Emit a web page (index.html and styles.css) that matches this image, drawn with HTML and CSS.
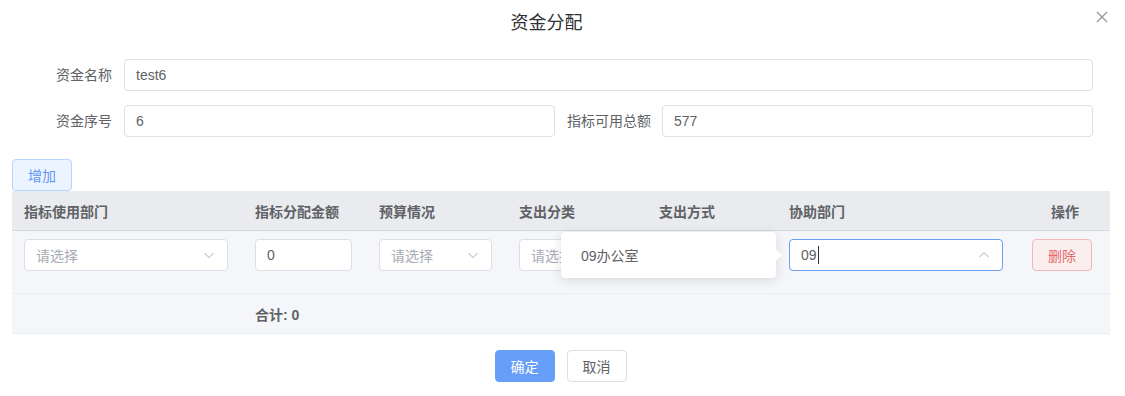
FILE: index.html
```html
<!DOCTYPE html>
<html lang="zh-CN">
<head>
    <meta charset="UTF-8">
    <title>资金分配</title>
    <link rel="stylesheet" href="styles.css">
</head>
<body>
    <div class="dialog">
        <div class="dialog-header">
            <span class="dialog-title">资金分配</span>
            <button class="dialog-close" aria-label="关闭">
                <svg width="12" height="12" viewBox="0 0 12 12"><path d="M1 1L11 11M11 1L1 11" stroke="#909399" stroke-width="1.2" fill="none"/></svg>
            </button>
        </div>

        <div class="dialog-body">
            <form class="fund-form">
                <div class="form-row">
                    <label class="form-label">资金名称</label>
                    <input class="text-input wide" type="text" value="test6">
                </div>
                <div class="form-row">
                    <label class="form-label">资金序号</label>
                    <input class="text-input" type="text" value="6">
                    <label class="form-label-inline">指标可用总额</label>
                    <input class="text-input" type="text" value="577">
                </div>
            </form>

            <button class="btn btn-plain-primary add-btn">增加</button>

            <div class="table-wrap">
                <table class="alloc-table">
                    <colgroup>
                        <col style="width:231px">
                        <col style="width:124px">
                        <col style="width:140px">
                        <col style="width:140px">
                        <col style="width:130px">
                        <col style="width:241px">
                        <col>
                    </colgroup>
                    <thead>
                        <tr>
                            <th>指标使用部门</th>
                            <th>指标分配金额</th>
                            <th>预算情况</th>
                            <th>支出分类</th>
                            <th>支出方式</th>
                            <th>协助部门</th>
                            <th class="center">操作</th>
                        </tr>
                    </thead>
                    <tbody>
                        <tr class="data-row">
                            <td>
                                <div class="select">
                                    <span class="placeholder">请选择</span>
                                    <svg class="chevron" width="12" height="12" viewBox="0 0 12 12"><path d="M1.5 4L6 8.5L10.5 4" stroke="#a8abb2" stroke-width="1" fill="none"/></svg>
                                </div>
                            </td>
                            <td><div class="select"><span class="value">0</span></div></td>
                            <td>
                                <div class="select">
                                    <span class="placeholder">请选择</span>
                                    <svg class="chevron" width="12" height="12" viewBox="0 0 12 12"><path d="M1.5 4L6 8.5L10.5 4" stroke="#a8abb2" stroke-width="1" fill="none"/></svg>
                                </div>
                            </td>
                            <td>
                                <div class="select">
                                    <span class="placeholder">请选择</span>
                                    <svg class="chevron" width="12" height="12" viewBox="0 0 12 12"><path d="M1.5 4L6 8.5L10.5 4" stroke="#a8abb2" stroke-width="1" fill="none"/></svg>
                                </div>
                            </td>
                            <td></td>
                            <td>
                                <div class="select focused">
                                    <span class="value">09<span class="caret"></span></span>
                                    <svg class="chevron" width="12" height="12" viewBox="0 0 12 12"><path d="M1.5 8L6 3.5L10.5 8" stroke="#a8abb2" stroke-width="1" fill="none"/></svg>
                                </div>
                            </td>
                            <td class="op-cell"><button class="btn btn-plain-danger">删除</button></td>
                        </tr>
                        <tr class="sum-row">
                            <td></td>
                            <td><strong>合计: 0</strong></td>
                            <td></td>
                            <td></td>
                            <td></td>
                            <td></td>
                            <td></td>
                        </tr>
                    </tbody>
                </table>

                <!-- autocomplete suggestions for 协助部门 -->
                <div class="suggest-pop">
                    <div class="suggest-item">09办公室</div>
                    <span class="suggest-arrow"></span>
                </div>
            </div>
        </div>

        <div class="dialog-footer">
            <button class="btn btn-primary">确定</button>
            <button class="btn btn-default">取消</button>
        </div>
    </div>
</body>
</html>
```

FILE: styles.css
```css
body { margin: 0; background: #fff; font-family: "Liberation Sans", "Noto Sans CJK SC", sans-serif; font-size: 14px; color: #606266; }
.dialog { width: 1125px; height: 396px; background: #fff; overflow: hidden; }

.dialog-header { position: relative; padding: 11px 32px 0 0; height: 24px; text-align: center; }
.dialog-title { font-size: 18px; line-height: 24px; color: #303133; }
.dialog-close { position: absolute; top: 11px; right: 17px; width: 12px; height: 12px; padding: 0; border: none; background: none; cursor: pointer; display: flex; }

.dialog-body { padding: 24px 15px 0 12px; }

.fund-form { display: flex; flex-direction: column; gap: 14px; padding-right: 17px; }
.form-row { display: flex; align-items: center; height: 32px; }
.form-label { width: 100px; padding-right: 12px; text-align: right; line-height: 32px; flex-shrink: 0; }
.form-label-inline { padding: 0 11px 0 12px; line-height: 32px; flex-shrink: 0; }
.text-input { flex: 1; min-width: 0; height: 32px; box-sizing: border-box; border: 1px solid #dcdfe6; border-radius: 4px; padding: 0 11px; font: inherit; color: #606266; outline: none; }

.btn { height: 32px; box-sizing: border-box; padding: 0 15px; border-radius: 4px; font: inherit; font-size: 14px; cursor: pointer; border: 1px solid #dcdfe6; background: #fff; color: #606266; }
.btn-plain-primary { background: #ecf5ff; border-color: #b7d4fb; color: #5f97f5; }
.btn-plain-danger { width: 60px; background: #fbeeee; border-color: #f2b8b8; color: #e46a6a; padding: 0; }
.btn-primary { width: 60px; padding: 0; background: #679ef8; border-color: #679ef8; color: #fff; }
.btn-default { width: 60px; padding: 0; }
.add-btn { margin-top: 22px; width: 60px; padding: 0; display: block; }

.table-wrap { position: relative; width: 1098px; }
.alloc-table { width: 100%; table-layout: fixed; border-collapse: collapse; }
.alloc-table th { height: 39px; padding: 0 12px; background: #e9ebef; border-bottom: 1px solid #d6d9df; text-align: left; font-weight: bold; color: #606266; white-space: nowrap; }
.alloc-table th.center { text-align: center; padding: 0 0 0 2px; }
.alloc-table td { padding: 0 15px 0 12px; background: #f5f6fa; }
.data-row td { height: 62px; padding-top: 8px; padding-bottom: 22px; box-sizing: border-box; border-bottom: 1px solid #e9ecf2; vertical-align: top; }
.alloc-table .op-cell { text-align: center; padding-left: 0; padding-right: 4px; }
.sum-row td { height: 39px; border-bottom: 1px solid #e9ecf2; color: #606266; }
.sum-row strong { font-weight: bold; }

.select { display: flex; align-items: center; justify-content: space-between; height: 32px; box-sizing: border-box; background: #fff; border: 1px solid #dcdfe6; border-radius: 4px; padding: 0 12px 0 11px; }
.select.focused { border-color: #6a9ff4; }
.placeholder { color: #a8abb2; white-space: nowrap; }
.value { color: #606266; display: flex; align-items: center; }
.caret { display: inline-block; width: 1px; height: 18px; background: #303133; margin-left: 1px; }
.chevron { flex-shrink: 0; }

.suggest-pop { position: absolute; left: 549px; top: 41px; width: 215px; height: 46px; background: #fff; border-radius: 4px; box-shadow: 0 2px 12px rgba(0, 0, 0, 0.12); display: flex; align-items: center; }
.suggest-item { padding-left: 20px; color: #606266; }
.suggest-arrow { position: absolute; right: -6px; top: 17px; width: 0; height: 0; border-top: 6px solid transparent; border-bottom: 6px solid transparent; border-left: 6px solid #fff; }

.dialog-footer { display: flex; justify-content: center; gap: 12px; padding: 16px 4px 0 0; }
```
